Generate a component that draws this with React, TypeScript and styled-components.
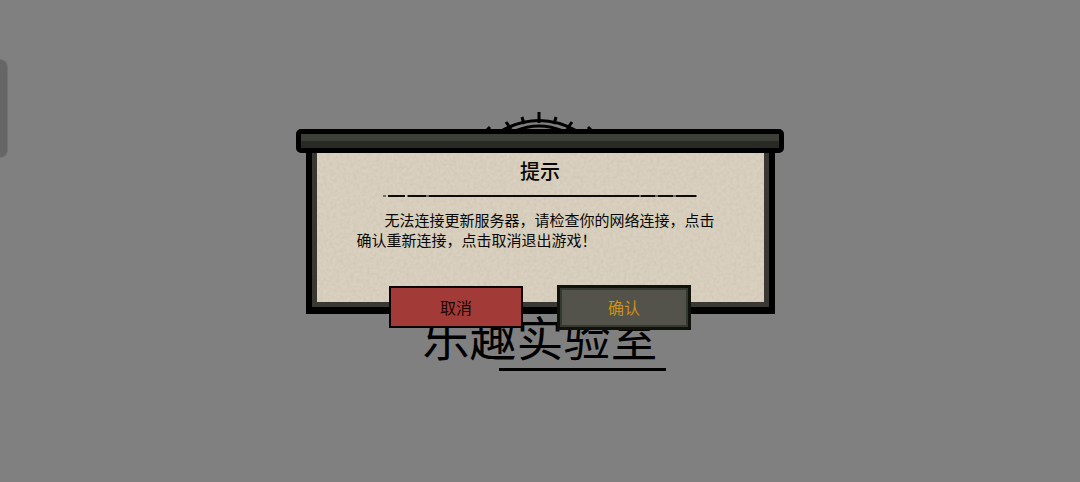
import React from "react";
import styled, { createGlobalStyle, css } from "styled-components";

const GlobalStyle = createGlobalStyle`
  *, *::before, *::after { box-sizing: border-box; }
  body {
    margin: 0;
    background: #808080;
    color: #080705;
    font-family: "Noto Sans CJK SC", "Noto Sans", sans-serif;
  }
`;

const Screen = styled.div`
  min-height: 100vh;
  display: grid;
  place-items: center;
  overflow: hidden;
`;

const SideHandle = styled.div`
  position: absolute;
  left: 0;
  top: 59px;
  width: 8px;
  height: 99px;
  border: 1px solid #73736b;
  border-left: 0;
  border-radius: 0 8px 8px 0;
  background: #666666;
`;

const Splash = styled.div`
  grid-area: 1 / 1;
  display: flex;
  flex-direction: column;
  align-items: center;
  width: 252px;
`;

const Gear = styled.svg`
  display: block;
  width: 110px;
  height: 110px;
`;

const StudioName = styled.div`
  padding: 86px 0 4px;
  font-size: 47px;
  line-height: 56px;
  white-space: nowrap;
  color: #000;
`;

const StudioRule = styled.div`
  align-self: flex-end;
  width: 167px;
  height: 3px;
  background: #000;
`;

const Dialog = styled.section`
  grid-area: 1 / 1;
  z-index: 1;
  display: flex;
  flex-direction: column;
  align-items: center;
  width: min(488px, 100%);
  margin-bottom: 24px;
`;

const Rail = styled.div`
  width: 100%;
  height: 24px;
  border: 5px solid #000;
  border-radius: 5px;
  background: linear-gradient(#3d3f39 0 45%, #292a26 55% 100%);
`;

const Frame = styled.div`
  width: calc(100% - 19px);
  padding: 0 5px 5px;
  border: solid #000;
  border-width: 0 6px 7px;
  background: #3a3833;
`;

const Paper = styled.div`
  position: relative;
  display: flex;
  flex-direction: column;
  align-items: center;
  min-height: 149px;
  padding: 3px 40px 0;
  background: #d9d0bf;
`;

const Grain = styled.svg`
  position: absolute;
  inset: 0;
  width: 100%;
  height: 100%;
`;

const Title = styled.h1`
  position: relative;
  margin: 0;
  font-size: 20px;
  line-height: 30px;
  font-weight: 500;
`;

const Divider = styled.svg`
  position: relative;
  display: block;
  flex: none;
  width: 314px;
  height: 4px;
  margin-top: 8px;
`;

const Message = styled.p`
  position: relative;
  align-self: stretch;
  margin: 12px 0 0;
  font-size: 15px;
  line-height: 20px;
  text-indent: 28px;
`;

const Actions = styled.div`
  z-index: 1;
  display: flex;
  align-items: center;
  gap: 34px;
  margin-top: -29px;
`;

const ActionButton = styled.button<{ $tone: "cancel" | "confirm" }>`
  width: 134px;
  padding: 0;
  border-radius: 0;
  font-family: inherit;
  font-size: 16px;
  cursor: pointer;
  ${({ $tone }) =>
    $tone === "cancel"
      ? css`
          height: 42px;
          border: 2px solid #0b0303;
          background: #a23b37;
          color: #190504;
        `
      : css`
          height: 45px;
          border: 3px solid #10120c;
          background: #53534c;
          box-shadow: inset 0 0 0 2px #36392f;
          color: #d0900f;
        `}
`;

export default function App() {
  return (
    <>
      <GlobalStyle />
      <Screen>
        <SideHandle />
        <Splash>
          <Gear viewBox="-54 1 110 110" fill="none" stroke="#000" aria-hidden="true">
            <path d="M-38 20Q0-1 38 20" strokeWidth="3" />
            <path d="M-24 20Q0 10 24 20" strokeWidth="3" />
            <path
              d="M0 1V12M-17 6L-15 13M17 6L15 13M-33 11L-28 18M33 11L28 18M-52 19L-49 16M52 19L49 16"
              strokeWidth="3"
            />
          </Gear>
          <StudioName>乐趣实验室</StudioName>
          <StudioRule />
        </Splash>
        <Dialog role="dialog" aria-labelledby="dialog-title">
          <Rail />
          <Frame>
            <Paper>
              <Grain aria-hidden="true">
                <filter id="paper-grain">
                  <feTurbulence type="fractalNoise" baseFrequency="0.3" numOctaves="2" seed="4" />
                  <feColorMatrix values="0 0 0 0 0.42  0 0 0 0 0.36  0 0 0 0 0.26  0.35 0 0 0 -0.12" />
                </filter>
                <rect width="100%" height="100%" filter="url(#paper-grain)" />
              </Grain>
              <Title id="dialog-title">提示</Title>
              <Divider viewBox="0 0 314 4" stroke="#0d0b08" aria-hidden="true">
                <path d="M0 2H3M5 2H22M24 2H47M49 2H314" strokeWidth="1" />
                <path d="M5 2H22M25 2H43M46 2H256M258 2H272M275 2H290M293 2H313" strokeWidth="2" />
              </Divider>
              <Message>
                无法连接更新服务器，请检查你的网络连接，点击确认重新连接，点击取消退出游戏！
              </Message>
            </Paper>
          </Frame>
          <Actions>
            <ActionButton type="button" $tone="cancel">取消</ActionButton>
            <ActionButton type="button" $tone="confirm">确认</ActionButton>
          </Actions>
        </Dialog>
      </Screen>
    </>
  );
}
